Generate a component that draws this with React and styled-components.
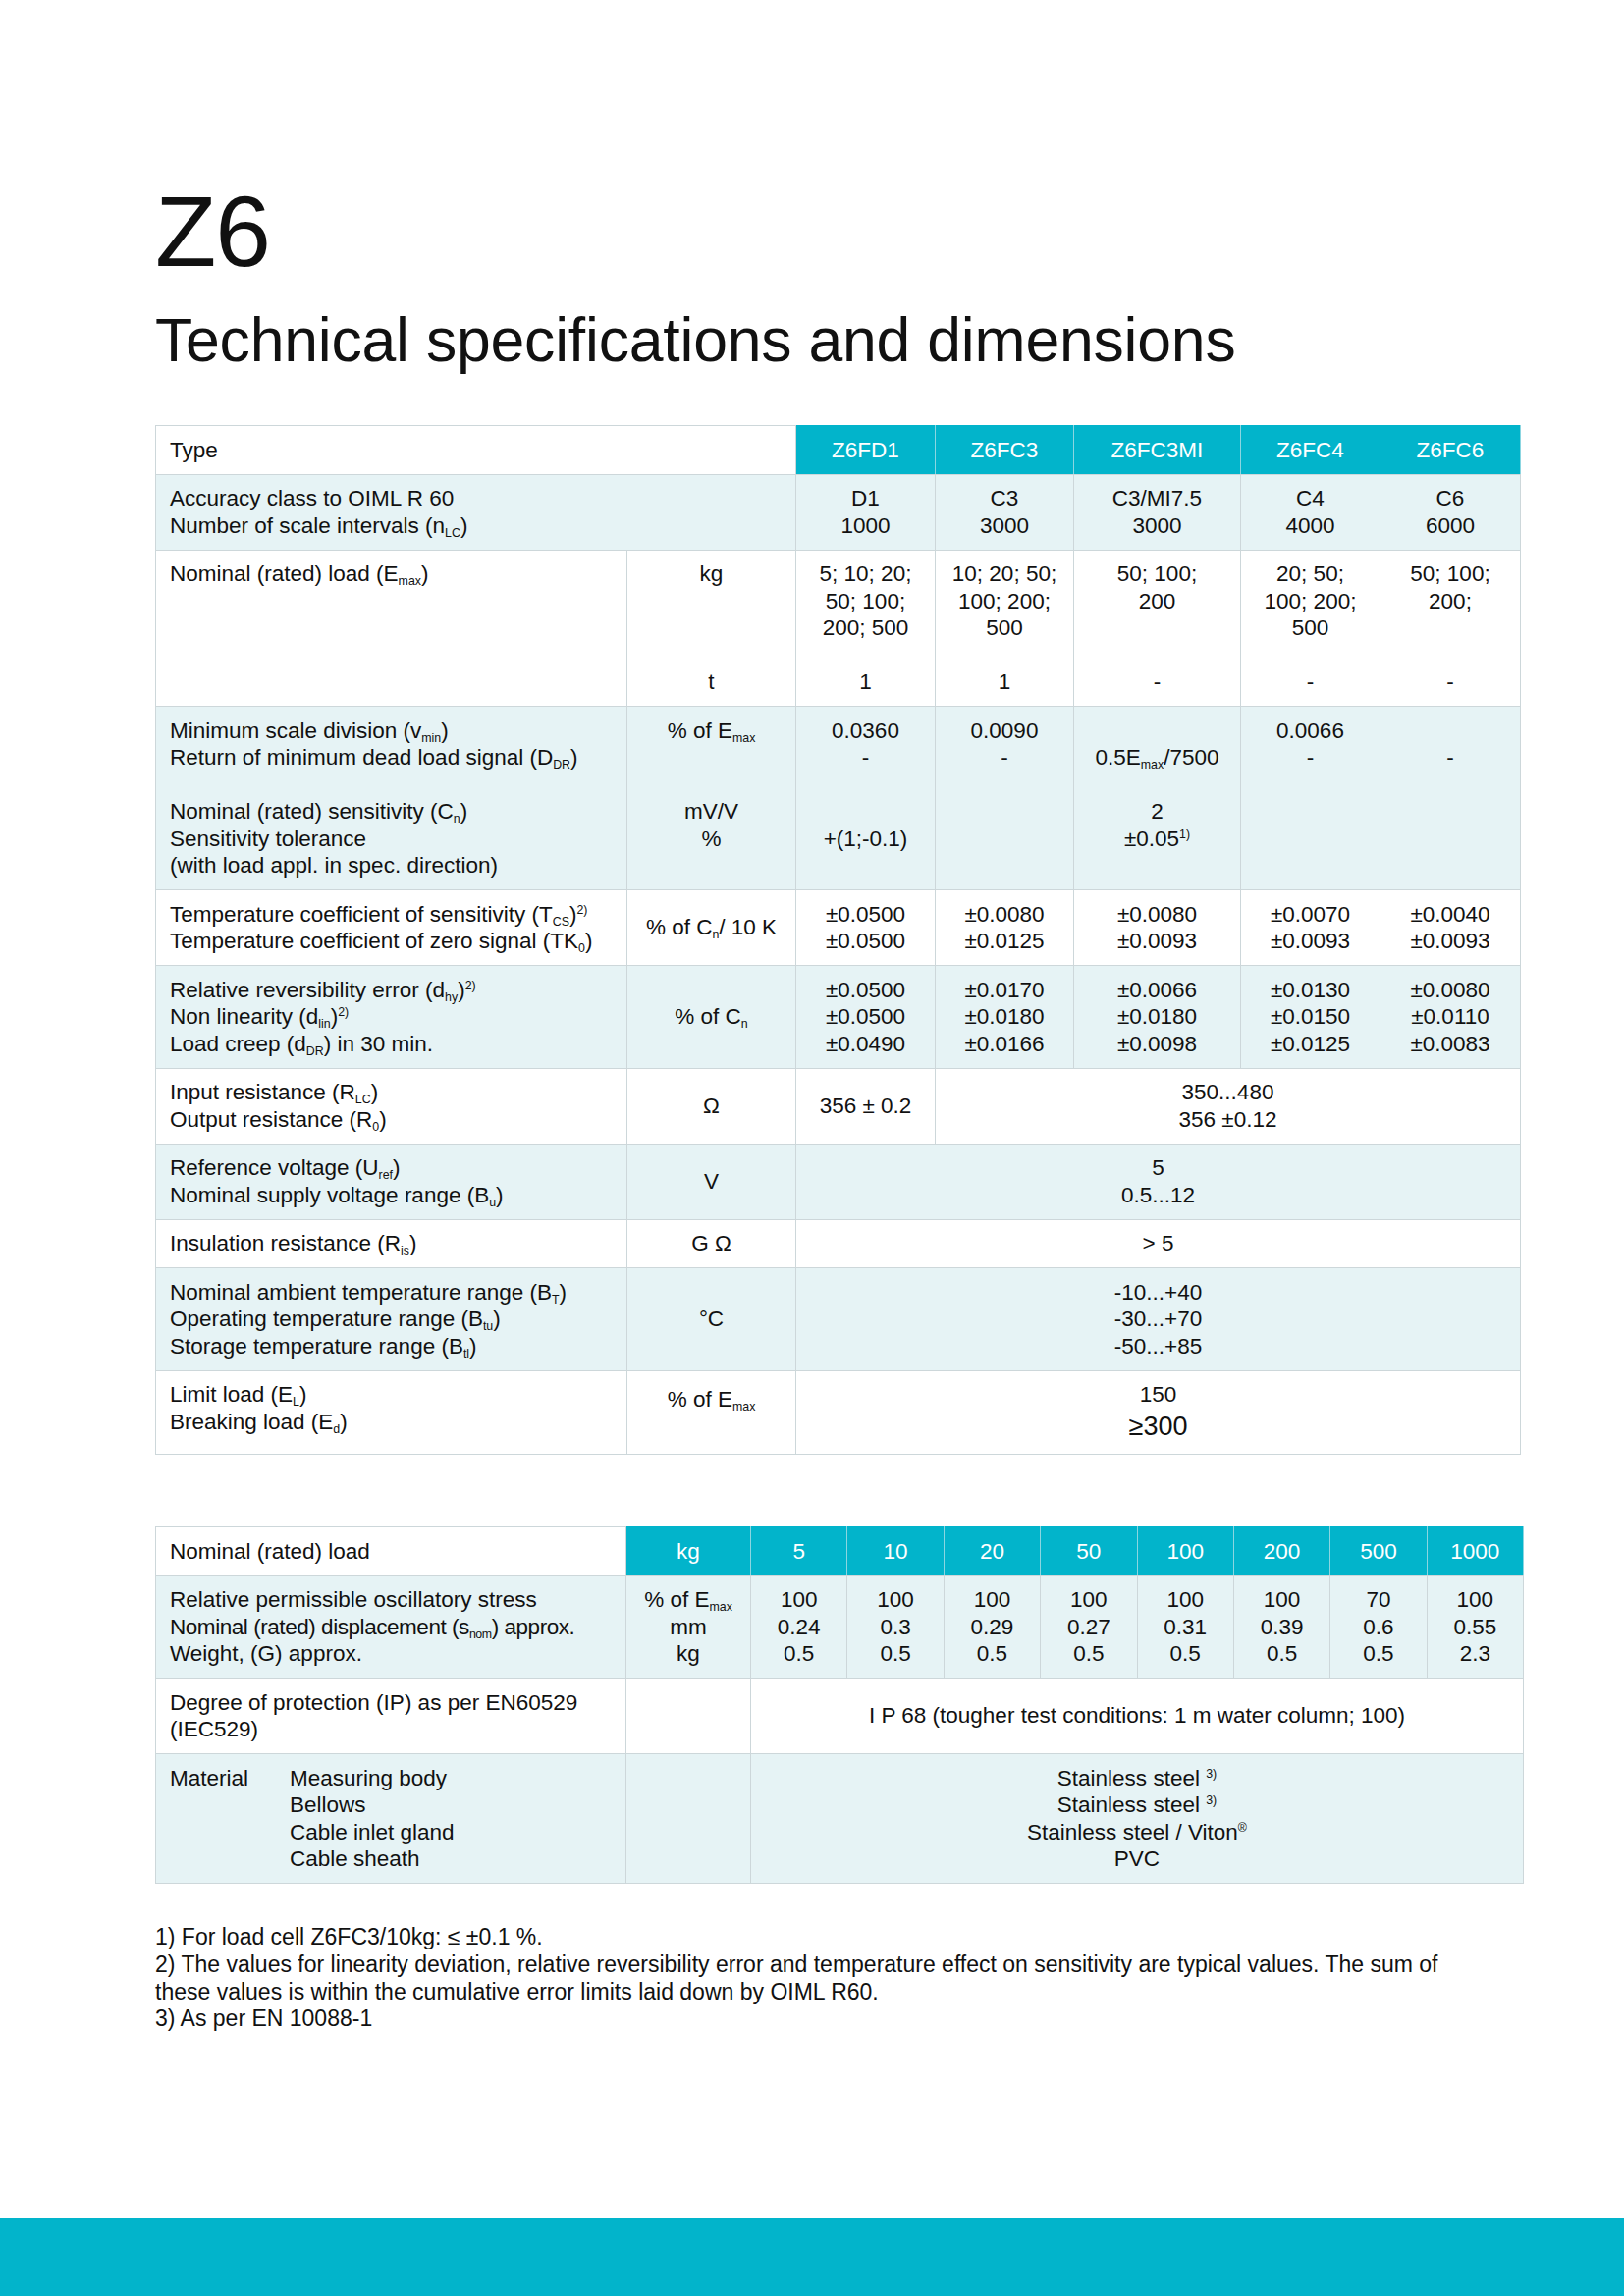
import React from "react";
import styled, { createGlobalStyle } from "styled-components";

const TEAL = "#02b4cb";
const PALE = "#e6f3f5";
const RULE = "#cdd7da";
const SANS = `"Liberation Sans", Arial, sans-serif`;
const TEXT = 22.5;
const PAD = 10.5;

const GlobalStyle = createGlobalStyle`
  html, body { margin: 0; padding: 0; background: #fff; }
  body { font-family: ${SANS}; color: #111; }
`;

const Page = styled.div`
  width: 1654px;
  min-height: 2339px;
  display: flex;
  flex-direction: column;
`;

const Content = styled.main`
  padding: 185px 0 0 158px;
  width: 1393px;
`;

const Title = styled.h1`
  margin: 0;
  font-weight: 400;
  font-size: 102px;
  line-height: 102px;
  letter-spacing: -1px;
`;

const Subtitle = styled.h2`
  margin: 24px 0 0;
  font-weight: 400;
  font-size: 62.5px;
  line-height: 71px;
  letter-spacing: -0.2px;
`;

const SpecTable = styled.table`
  width: ${(p) => p.$width}px;
  margin-top: ${(p) => p.$gap}px;
  border-collapse: collapse;
  table-layout: fixed;
  font-size: ${TEXT}px;
  line-height: 27.5px;
`;

const Col = styled.col`
  width: ${(p) => p.$w}px;
`;

const Row = styled.tr`
  background: ${(p) => (p.$pale ? PALE : "#fff")};
`;

const Cell = styled.td`
  border: 1px solid ${RULE};
  padding: ${PAD}px 14px;
  vertical-align: ${(p) => p.$valign || "middle"};
  text-align: ${(p) => p.$align || "center"};
  ${(p) => p.$nudge && `padding-top: ${PAD + p.$nudge}px;`}
`;

const HeadCell = styled.th`
  border: 1px solid ${TEAL};
  border-left-color: #8cd6e1;
  border-right-color: #8cd6e1;
  border-bottom-color: ${RULE};
  padding: ${PAD}px 6px;
  background: ${TEAL};
  color: #fff;
  font-weight: 400;
  text-align: center;
`;

const TypeCell = styled.th`
  border: 1px solid ${RULE};
  padding: ${PAD}px 14px;
  background: #fff;
  font-weight: 400;
  text-align: left;
`;

const Line = styled.div`
  height: ${(p) => (p.$big ? 36 : 27.5)}px;
  line-height: ${(p) => (p.$big ? 36 : 27.5)}px;
  font-size: ${(p) => (p.$big ? 27 : TEXT)}px;
  letter-spacing: ${(p) => (p.$tight ? -0.45 : 0)}px;
  white-space: nowrap;
`;

const Sub = styled.sub`
  font-size: 0.55em;
  line-height: 0;
  vertical-align: -0.35em;
`;

const Sup = styled.sup`
  font-size: 0.55em;
  line-height: 0;
  vertical-align: 0.65em;
`;

const MaterialLabel = styled.div`
  display: grid;
  grid-template-columns: 122px auto;
`;

const Notes = styled.section`
  margin-top: 41px;
  font-size: 23px;
  line-height: 27.8px;
`;

const Note = styled.p`
  margin: 0;
`;

const BottomBar = styled.footer`
  margin-top: auto;
  height: 79px;
  background: ${TEAL};
`;

const Lines = ({ items }) =>
  items.map((t, i) => <Line key={i}>{t === "" ? "\u00a0" : t}</Line>);

const Emax = () => (
  <>
    E<Sub>max</Sub>
  </>
);

const types = ["Z6FD1", "Z6FC3", "Z6FC3MI", "Z6FC4", "Z6FC6"];

const accuracy = [
  ["D1", "1000"],
  ["C3", "3000"],
  ["C3/MI7.5", "3000"],
  ["C4", "4000"],
  ["C6", "6000"],
];

const nominalLoads = [
  ["5; 10; 20;", "50; 100;", "200; 500", "", "1"],
  ["10; 20; 50;", "100; 200;", "500", "", "1"],
  ["50; 100;", "200", "", "", "-"],
  ["20; 50;", "100; 200;", "500", "", "-"],
  ["50; 100;", "200;", "", "", "-"],
];

const scaleDivision = [
  ["0.0360", "-", "", "", "+(1;-0.1)", ""],
  ["0.0090", "-", "", "", "", ""],
  [
    "",
    <>
      0.5<Emax />/7500
    </>,
    "",
    "2",
    <>
      ±0.05<Sup>1)</Sup>
    </>,
    "",
  ],
  ["0.0066", "-", "", "", "", ""],
  ["", "-", "", "", "", ""],
];

const tempCoeff = [
  ["±0.0500", "±0.0500"],
  ["±0.0080", "±0.0125"],
  ["±0.0080", "±0.0093"],
  ["±0.0070", "±0.0093"],
  ["±0.0040", "±0.0093"],
];

const reversibility = [
  ["±0.0500", "±0.0500", "±0.0490"],
  ["±0.0170", "±0.0180", "±0.0166"],
  ["±0.0066", "±0.0180", "±0.0098"],
  ["±0.0130", "±0.0150", "±0.0125"],
  ["±0.0080", "±0.0110", "±0.0083"],
];

const capacities = [
  ["5", "100", "0.24", "0.5"],
  ["10", "100", "0.3", "0.5"],
  ["20", "100", "0.29", "0.5"],
  ["50", "100", "0.27", "0.5"],
  ["100", "100", "0.31", "0.5"],
  ["200", "100", "0.39", "0.5"],
  ["500", "70", "0.6", "0.5"],
  ["1000", "100", "0.55", "2.3"],
];

const SpecsTable = () => (
  <SpecTable $width={1390} $gap={51}>
    <colgroup>
      <Col $w={480} />
      <Col $w={172} />
      <Col $w={142} />
      <Col $w={141} />
      <Col $w={170} />
      <Col $w={142} />
      <Col $w={143} />
    </colgroup>
    <tbody>
      <Row>
        <TypeCell colSpan={2}>Type</TypeCell>
        {types.map((t) => (
          <HeadCell key={t}>{t}</HeadCell>
        ))}
      </Row>

      <Row $pale>
        <Cell colSpan={2} $align="left">
          <Lines
            items={[
              "Accuracy class to OIML R 60",
              <>
                Number of scale intervals (n<Sub>LC</Sub>)
              </>,
            ]}
          />
        </Cell>
        {accuracy.map((c, i) => (
          <Cell key={i}>
            <Lines items={c} />
          </Cell>
        ))}
      </Row>

      <Row>
        <Cell $align="left" $valign="top">
          <Lines
            items={[
              <>
                Nominal (rated) load (<Emax />)
              </>,
            ]}
          />
        </Cell>
        <Cell $valign="top">
          <Lines items={["kg", "", "", "", "t"]} />
        </Cell>
        {nominalLoads.map((c, i) => (
          <Cell key={i} $valign="top">
            <Lines items={c} />
          </Cell>
        ))}
      </Row>

      <Row $pale>
        <Cell $align="left" $valign="top">
          <Lines
            items={[
              <>
                Minimum scale division (v<Sub>min</Sub>)
              </>,
              <>
                Return of minimum dead load signal (D<Sub>DR</Sub>)
              </>,
              "",
              <>
                Nominal (rated) sensitivity (C<Sub>n</Sub>)
              </>,
              "Sensitivity tolerance",
              "(with load appl. in spec. direction)",
            ]}
          />
        </Cell>
        <Cell $valign="top">
          <Lines
            items={[
              <>
                % of <Emax />
              </>,
              "",
              "",
              "mV/V",
              "%",
              "",
            ]}
          />
        </Cell>
        {scaleDivision.map((c, i) => (
          <Cell key={i} $valign="top">
            <Lines items={c} />
          </Cell>
        ))}
      </Row>

      <Row>
        <Cell $align="left">
          <Lines
            items={[
              <>
                Temperature coefficient of sensitivity (T<Sub>CS</Sub>)<Sup>2)</Sup>
              </>,
              <>
                Temperature coefficient of zero signal (TK<Sub>0</Sub>)
              </>,
            ]}
          />
        </Cell>
        <Cell>
          <Line>
            % of C<Sub>n</Sub>/ 10 K
          </Line>
        </Cell>
        {tempCoeff.map((c, i) => (
          <Cell key={i}>
            <Lines items={c} />
          </Cell>
        ))}
      </Row>

      <Row $pale>
        <Cell $align="left">
          <Lines
            items={[
              <>
                Relative reversibility error (d<Sub>hy</Sub>)<Sup>2)</Sup>
              </>,
              <>
                Non linearity (d<Sub>lin</Sub>)<Sup>2)</Sup>
              </>,
              <>
                Load creep (d<Sub>DR</Sub>) in 30 min.
              </>,
            ]}
          />
        </Cell>
        <Cell>
          <Line>
            % of C<Sub>n</Sub>
          </Line>
        </Cell>
        {reversibility.map((c, i) => (
          <Cell key={i}>
            <Lines items={c} />
          </Cell>
        ))}
      </Row>

      <Row>
        <Cell $align="left">
          <Lines
            items={[
              <>
                Input resistance (R<Sub>LC</Sub>)
              </>,
              <>
                Output resistance (R<Sub>0</Sub>)
              </>,
            ]}
          />
        </Cell>
        <Cell>
          <Line>Ω</Line>
        </Cell>
        <Cell>
          <Line>356 ± 0.2</Line>
        </Cell>
        <Cell colSpan={4}>
          <Lines items={["350...480", "356 ±0.12"]} />
        </Cell>
      </Row>

      <Row $pale>
        <Cell $align="left">
          <Lines
            items={[
              <>
                Reference voltage (U<Sub>ref</Sub>)
              </>,
              <>
                Nominal supply voltage range (B<Sub>u</Sub>)
              </>,
            ]}
          />
        </Cell>
        <Cell>
          <Line>V</Line>
        </Cell>
        <Cell colSpan={5}>
          <Lines items={["5", "0.5...12"]} />
        </Cell>
      </Row>

      <Row>
        <Cell $align="left">
          <Line>
            Insulation resistance (R<Sub>is</Sub>)
          </Line>
        </Cell>
        <Cell>
          <Line>G Ω</Line>
        </Cell>
        <Cell colSpan={5}>
          <Line>&gt; 5</Line>
        </Cell>
      </Row>

      <Row $pale>
        <Cell $align="left">
          <Lines
            items={[
              <>
                Nominal ambient temperature range (B<Sub>T</Sub>)
              </>,
              <>
                Operating temperature range (B<Sub>tu</Sub>)
              </>,
              <>
                Storage temperature range (B<Sub>tl</Sub>)
              </>,
            ]}
          />
        </Cell>
        <Cell>
          <Line>°C</Line>
        </Cell>
        <Cell colSpan={5}>
          <Lines items={["-10...+40", "-30...+70", "-50...+85"]} />
        </Cell>
      </Row>

      <Row>
        <Cell $align="left" $valign="top">
          <Lines
            items={[
              <>
                Limit load (E<Sub>L</Sub>)
              </>,
              <>
                Breaking load (E<Sub>d</Sub>)
              </>,
            ]}
          />
        </Cell>
        <Cell $valign="top" $nudge={5}>
          <Line>
            % of <Emax />
          </Line>
        </Cell>
        <Cell colSpan={5} $valign="top">
          <Line>150</Line>
          <Line $big>≥300</Line>
        </Cell>
      </Row>
    </tbody>
  </SpecTable>
);

const LoadTable = () => (
  <SpecTable $width={1393} $gap={73}>
    <colgroup>
      <Col $w={479} />
      <Col $w={127} />
      {capacities.map((c) => (
        <Col key={c[0]} $w={98.375} />
      ))}
    </colgroup>
    <tbody>
      <Row>
        <TypeCell>Nominal (rated) load</TypeCell>
        <HeadCell>kg</HeadCell>
        {capacities.map((c) => (
          <HeadCell key={c[0]}>{c[0]}</HeadCell>
        ))}
      </Row>

      <Row $pale>
        <Cell $align="left">
          <Line>Relative permissible oscillatory stress</Line>
          <Line $tight>
            Nominal (rated) displacement (s<Sub>nom</Sub>) approx.
          </Line>
          <Line>Weight, (G) approx.</Line>
        </Cell>
        <Cell>
          <Lines
            items={[
              <>
                % of <Emax />
              </>,
              "mm",
              "kg",
            ]}
          />
        </Cell>
        {capacities.map((c) => (
          <Cell key={c[0]}>
            <Lines items={c.slice(1)} />
          </Cell>
        ))}
      </Row>

      <Row>
        <Cell $align="left">
          <Lines items={["Degree of protection (IP) as per EN60529", "(IEC529)"]} />
        </Cell>
        <Cell />
        <Cell colSpan={8}>
          <Line>I P 68 (tougher test conditions: 1 m water column; 100)</Line>
        </Cell>
      </Row>

      <Row $pale>
        <Cell $align="left" $valign="top">
          <MaterialLabel>
            <Line>Material</Line>
            <div>
              <Lines
                items={["Measuring body", "Bellows", "Cable inlet gland", "Cable sheath"]}
              />
            </div>
          </MaterialLabel>
        </Cell>
        <Cell />
        <Cell colSpan={8}>
          <Lines
            items={[
              <>
                Stainless steel <Sup>3)</Sup>
              </>,
              <>
                Stainless steel <Sup>3)</Sup>
              </>,
              <>
                Stainless steel / Viton<Sup>®</Sup>
              </>,
              "PVC",
            ]}
          />
        </Cell>
      </Row>
    </tbody>
  </SpecTable>
);

export default function App() {
  return (
    <Page>
      <GlobalStyle />
      <Content>
        <Title>Z6</Title>
        <Subtitle>Technical specifications and dimensions</Subtitle>
        <SpecsTable />
        <LoadTable />
        <Notes>
          <Note>1) For load cell Z6FC3/10kg: ≤ ±0.1 %.</Note>
          <Note>
            2) The values for linearity deviation, relative reversibility error and temperature
            effect on sensitivity are typical values. The sum of
            <br />
            these values is within the cumulative error limits laid down by OIML R60.
          </Note>
          <Note>3) As per EN 10088-1</Note>
        </Notes>
      </Content>
      <BottomBar />
    </Page>
  );
}
